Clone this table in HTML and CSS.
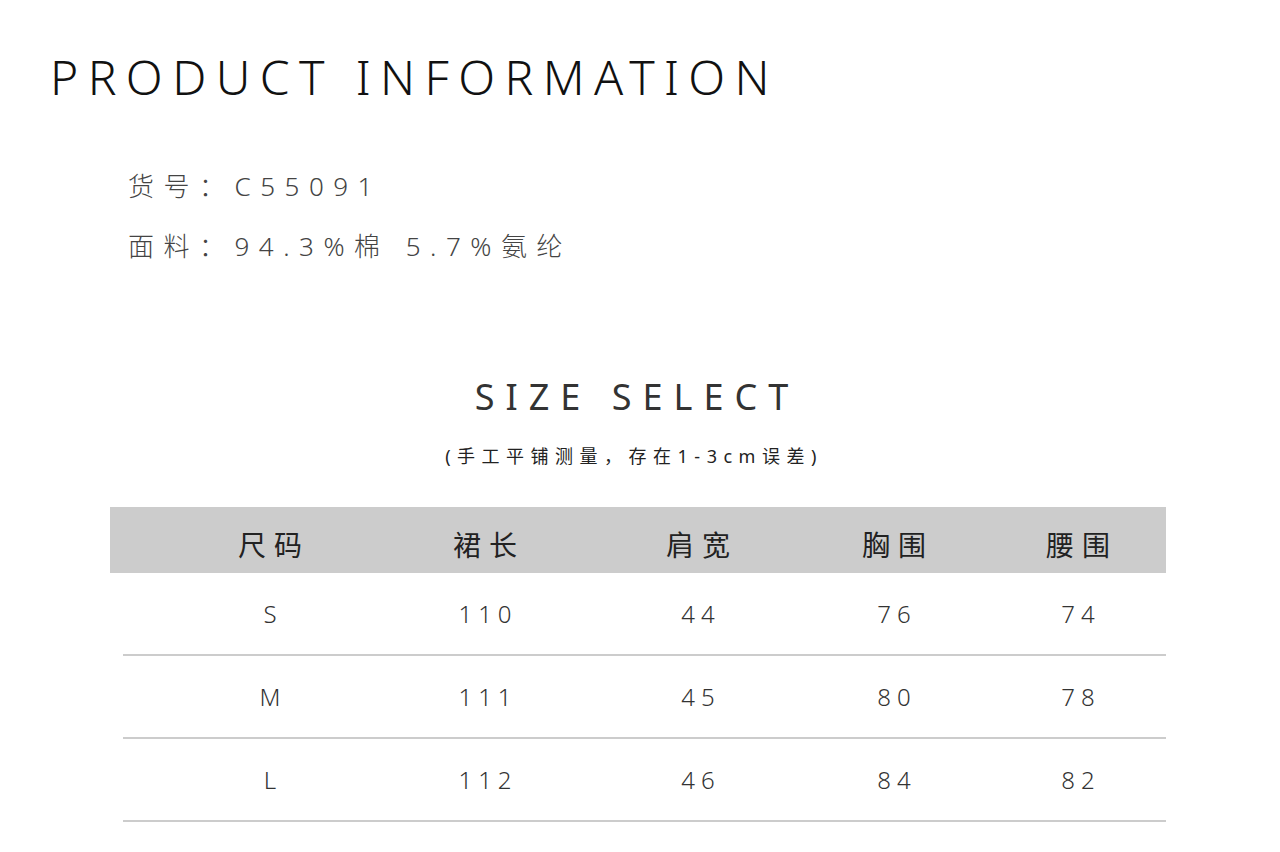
FILE: index.html
```html
<!DOCTYPE html>
<html lang="zh">
<head>
<meta charset="utf-8">
<title>Product Information</title>
<link rel="stylesheet" href="styles.css">
</head>
<body>
<div class="page">
  <h1 class="title">PRODUCT INFORMATION</h1>
  <div class="info">
    <p class="info-line">货号：C55091</p>
    <p class="info-line">面料：94.3%棉 5.7%氨纶</p>
  </div>
  <h2 class="size-title">SIZE SELECT</h2>
  <p class="size-note">(手工平铺测量，存在1-3cm误差)</p>
  <div class="table">
    <div class="row head">
      <div class="cell">尺码</div>
      <div class="cell">裙长</div>
      <div class="cell">肩宽</div>
      <div class="cell">胸围</div>
      <div class="cell">腰围</div>
    </div>
    <div class="row body">
      <div class="cell">S</div>
      <div class="cell">110</div>
      <div class="cell">44</div>
      <div class="cell">76</div>
      <div class="cell">74</div>
    </div>
    <div class="row body">
      <div class="cell">M</div>
      <div class="cell">111</div>
      <div class="cell">45</div>
      <div class="cell">80</div>
      <div class="cell">78</div>
    </div>
    <div class="row body">
      <div class="cell">L</div>
      <div class="cell">112</div>
      <div class="cell">46</div>
      <div class="cell">84</div>
      <div class="cell">82</div>
    </div>
  </div>
</div>
</body>
</html>
```

FILE: styles.css
```css
html, body {
  margin: 0;
  padding: 0;
  background: #ffffff;
}
body {
  font-family: "Noto Sans", "Noto Sans CJK SC", sans-serif;
  color: #333333;
}
.page {
  width: 1280px;
  height: 852px;
  overflow: hidden;
}
.title {
  margin: 0;
  padding: 49px 0 0 50px;
  font-family: "Noto Sans", sans-serif;
  font-weight: 300;
  font-size: 48px;
  line-height: 56px;
  letter-spacing: 9.4px;
  color: #111111;
}
.info {
  padding: 51px 0 0 128px;
}
.info-line {
  margin: 0;
  font-family: "Noto Sans", "Noto Sans CJK SC", sans-serif;
  font-weight: 300;
  font-size: 26px;
  line-height: 60px;
  letter-spacing: 9.5px;
  color: #444444;
}
.size-title {
  margin: 99px 0 0 0;
  padding-right: 6px;
  text-align: center;
  font-family: "Noto Sans", sans-serif;
  font-weight: 400;
  font-size: 36px;
  line-height: 44px;
  letter-spacing: 11px;
  color: #333333;
}
.size-note {
  margin: 25px 0 0 0;
  padding-right: 12px;
  text-align: center;
  font-family: "Noto Sans", "Noto Sans CJK SC", sans-serif;
  font-weight: 400;
  font-size: 18px;
  line-height: 24px;
  letter-spacing: 6.5px;
  color: #222222;
}
.table {
  margin: 39px 0 0 110px;
  width: 1056px;
}
.row {
  display: grid;
  grid-template-columns: 200px 230px 196px 196px 172px;
  align-items: center;
}
.head {
  height: 66px;
  padding-left: 60px;
  background: #cccccc;
}
.body {
  height: 81px;
  margin-left: 13px;
  padding-left: 47px;
  border-bottom: 2px solid #cccccc;
}
.cell {
  text-align: center;
}
.head .cell {
  padding-top: 8px;
  font-family: "Noto Sans CJK SC", sans-serif;
  font-size: 28px;
  font-weight: 400;
  letter-spacing: 8px;
  text-indent: 8px;
  color: #222222;
}
.body .cell {
  font-family: "Noto Sans", "Noto Sans CJK SC", sans-serif;
  font-weight: 300;
  font-size: 24px;
  letter-spacing: 6px;
  text-indent: 6px;
  color: #333333;
}
```
